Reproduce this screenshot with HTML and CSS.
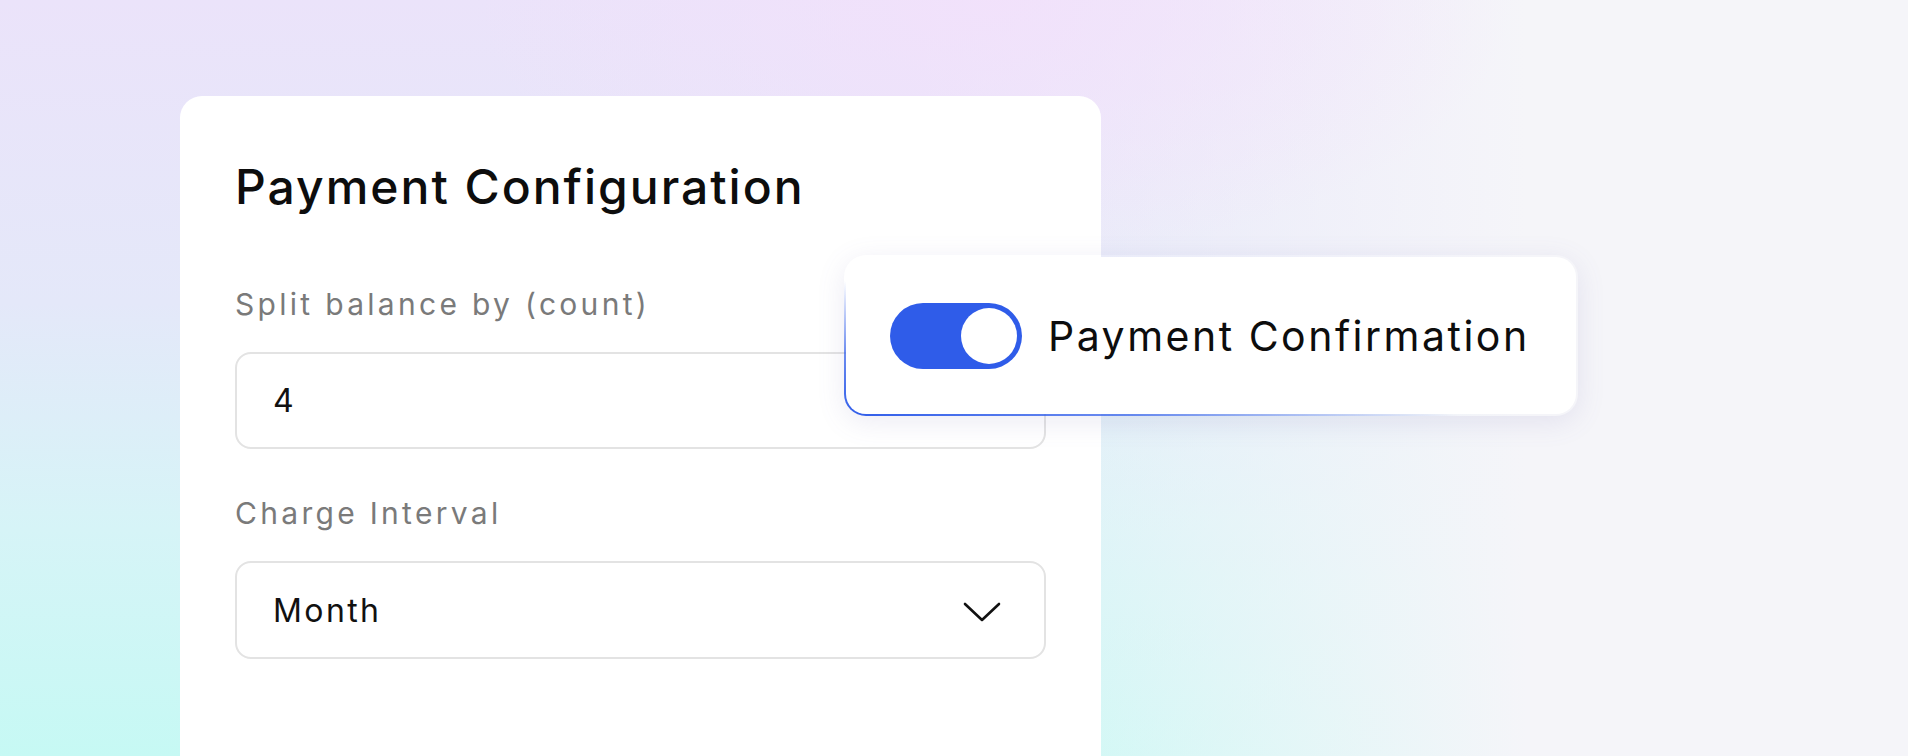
FILE: index.html
```html
<!DOCTYPE html>
<html lang="en">
<head>
  <meta charset="UTF-8" />
  <meta name="viewport" content="width=device-width, initial-scale=1.0"/>
  <title>Payment Configuration</title>
  <link rel="stylesheet" href="styles.css">
</head>
<body>
  <div class="stage">
    <div class="card">
      <h1 class="card-title">Payment Configuration</h1>

      <div class="field">
        <label class="field-label">Split balance by (count)</label>
        <div class="field-box">4</div>
      </div>

      <div class="field">
        <label class="field-label">Charge Interval</label>
        <div class="field-box select-box">
          <span>Month</span>
          <svg class="chevron" width="38" height="20" viewBox="0 0 38 20" fill="none">
            <path d="M2 2 L19 18 L36 2" stroke="#111" stroke-width="2.6" stroke-linecap="round" stroke-linejoin="round"/>
          </svg>
        </div>
      </div>
    </div>

    <!-- floating toggle -->
    <div class="toggle-card">
      <div class="switch"><span class="knob"></span></div>
      <span class="toggle-label">Payment Confirmation</span>
    </div>
  </div>
</body>
</html>
```

FILE: styles.css
```css
html, body {
  margin: 0;
  padding: 0;
  height: 100%;
  overflow: hidden;
}

body {
  font-family: Inter, "Noto Sans", sans-serif;
  color: #0d0d0d;
  background-color: #f5f5f9;
  background-image:
    radial-gradient(ellipse 520px 260px at 52% 0%, rgba(242, 225, 251, 0.9), rgba(242, 225, 251, 0)),
    linear-gradient(to right, rgba(245, 245, 249, 0) 0%, rgba(245, 245, 249, 0) 48%, rgba(245, 245, 249, 1) 80%),
    linear-gradient(to bottom, #ebe3fa 0%, #e4e8f9 40%, #d6f4f7 70%, #c6f9f4 100%);
}

.stage {
  position: relative;
  padding: 96px 0 0 180px;
}

.card {
  width: 811px;
  height: 700px;
  padding: 62px 55px 0 55px;
  background: #fff;
  border-radius: 22px;
}

.card-title {
  margin: 0 0 70px 0;
  font-size: 48px;
  line-height: 58px;
  font-weight: 500;
  letter-spacing: 2px;
}

.field {
  margin-bottom: 46px;
}

.field-label {
  display: block;
  margin-bottom: 30px;
  font-size: 30px;
  line-height: 36px;
  letter-spacing: 3.3px;
  color: #7a7a7a;
}

.field-box {
  box-sizing: border-box;
  height: 97px;
  display: flex;
  align-items: center;
  padding: 0 43px 0 36px;
  border: 2px solid #e3e3e3;
  border-radius: 16px;
  font-size: 32px;
  letter-spacing: 2.4px;
  color: #111;
}

.select-box {
  height: 98px;
  justify-content: space-between;
}

.chevron {
  margin-top: 4px;
}

.toggle-card {
  position: absolute;
  left: 844px;
  top: 255px;
  box-sizing: border-box;
  width: 734px;
  height: 161px;
  display: flex;
  align-items: center;
  gap: 26px;
  padding-left: 44px;
  border: 2px solid transparent;
  border-radius: 22px;
  background:
    linear-gradient(#fff, #fff) padding-box,
    linear-gradient(to top right, #2f5ce9 0%, rgba(47, 92, 233, 0.7) 20%, rgba(47, 92, 233, 0) 42%) border-box;
  box-shadow: 0 6px 28px rgba(110, 100, 170, 0.13);
}

.switch {
  position: relative;
  width: 132px;
  height: 66px;
  border-radius: 33px;
  background: #2f5ce9;
}

.knob {
  position: absolute;
  right: 5px;
  top: 5px;
  width: 56px;
  height: 56px;
  border-radius: 50%;
  background: #fff;
}

.toggle-label {
  font-size: 41px;
  font-weight: 400;
  letter-spacing: 2.5px;
  color: #0d0d0d;
}
```
